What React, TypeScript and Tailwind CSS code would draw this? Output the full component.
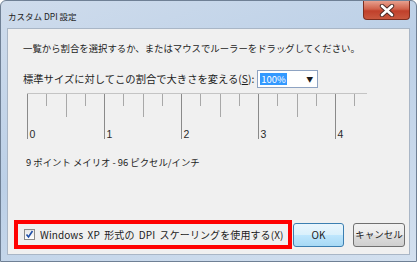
import React from "react";

const font = { fontFamily: '"Noto Sans CJK JP", "Noto Sans", sans-serif' };

const Ruler = () => {
  const ticks = Array.from({ length: 18 }, (_, i) => i);
  return (
    <svg width="342" height="50" className="block">
      <line x1="0" y1="0.5" x2="340" y2="0.5" stroke="#c4c4c4" />
      {ticks.map((i) => {
        const x = Math.round(i * 19.25) + 0.5;
        const len = i % 4 === 0 ? 46 : i % 2 === 0 ? 24 : 13;
        return (
          <line
            key={i}
            x1={x}
            y1="1"
            x2={x}
            y2={len}
            stroke={i % 4 === 0 ? "#8a8a8a" : "#a8a8a8"}
          />
        );
      })}
      {[0, 1, 2, 3, 4].map((n) => (
        <text
          key={n}
          x={Math.round(n * 77) + 2.5}
          y="45"
          fontSize="10.5"
          fill="#2a2a2a"
          fontFamily="Liberation Sans, sans-serif"
        >
          {n}
        </text>
      ))}
    </svg>
  );
};

export default function App() {
  return (
    <div
      className="w-[417px] h-[262px] flex flex-col rounded-t-[6px] border border-[#6f8095] bg-[linear-gradient(160deg,#cfdcec_0%,#bcd0e7_45%,#d3e0ef_100%)] text-[#1c1c1c] overflow-hidden"
      style={font}
    >
      <div className="h-[27px] flex items-start justify-between pl-[7px] pr-[6px]">
        <span className="text-[8.5px] mt-[9px] text-[#222]">カスタム DPI 設定</span>
        <div className="w-[47px] h-[19px] rounded-b-[4px] border border-t-0 border-[#7c2e20] bg-[linear-gradient(180deg,#e7a08e_0%,#d0614a_45%,#c0402b_55%,#c9583f_100%)] flex items-center justify-center">
          <svg width="16" height="13" viewBox="0 0 16 13">
            <path
              d="M3 2 L13 11 M13 2 L3 11"
              stroke="#4a2a26"
              strokeWidth="4.4"
              fill="none"
              strokeLinecap="round"
            />
            <path
              d="M3 2 L13 11 M13 2 L3 11"
              stroke="#ffffff"
              strokeWidth="2.6"
              fill="none"
              strokeLinecap="round"
            />
          </svg>
        </div>
      </div>
      <div className="flex-1 mx-[6px] mb-[6px] border border-[#a9b6c6] bg-[#f0f0f0] flex flex-col">
        <div className="pl-[15px] pt-[12px] text-[9.4px] leading-[14px]">
          一覧から割合を選択するか、またはマウスでルーラーをドラッグしてください。
        </div>
        <div className="pl-[15px] mt-[15px] flex items-center h-[18px]">
          <span className="text-[10.3px] leading-[14px]">
            標準サイズに対してこの割合で大きさを変える(<span className="underline">S</span>):
          </span>
          <div className="ml-[3px] w-[61px] h-[18px] bg-white border border-[#8ea3c2] flex items-center pl-[2px] pr-[4px] justify-between">
            <span className="bg-[#3399ff] text-white text-[9.5px] leading-[12px] px-[1px]">100%</span>
            <span className="text-[7px] leading-none">▼</span>
          </div>
        </div>
        <div className="pl-[19px] mt-[5px]">
          <Ruler />
        </div>
        <div className="pl-[18px] mt-[12px] text-[9.4px] leading-[14px]">
          9 ポイント メイリオ - 96 ピクセル/インチ
        </div>
        <div className="mt-auto mb-[5px] pl-[6px] pr-[4px] flex items-center">
          <div className="w-[278px] h-[29px] shrink-0 border-[4px] border-[#ff0000] flex items-center pl-[6px] gap-[5px]">
            <div className="w-[11px] h-[11px] shrink-0 border border-[#8a8a8a] bg-[linear-gradient(180deg,#e6e6e6,#ffffff)] flex items-center justify-center">
              <svg width="9" height="9" viewBox="0 0 9 9">
                <path d="M1.5 4.5 L3.5 7 L7.5 1" stroke="#1f4fa8" strokeWidth="1.6" fill="none" />
              </svg>
            </div>
            <span className="text-[10px] leading-[14px] whitespace-nowrap tracking-[0.1px] [word-spacing:2px]">
              Windows XP 形式の DPI スケーリングを使用する(X)
            </span>
          </div>
          <button className="ml-[1px] w-[52px] h-[24px] rounded-[3px] border border-[#3c7fb1] bg-[linear-gradient(180deg,#eaf6fd_0%,#d9f0fc_50%,#bee6fd_51%,#a7d9f5_100%)] text-[10px] text-[#1c1c1c]">
            OK
          </button>
          <button className="ml-[9px] w-[53px] h-[24px] rounded-[3px] border border-[#707070] bg-[linear-gradient(180deg,#f2f2f2_0%,#ebebeb_50%,#dddddd_51%,#cfcfcf_100%)] text-[9.5px] text-[#1c1c1c]">
            キャンセル
          </button>
        </div>
      </div>
    </div>
  );
}
